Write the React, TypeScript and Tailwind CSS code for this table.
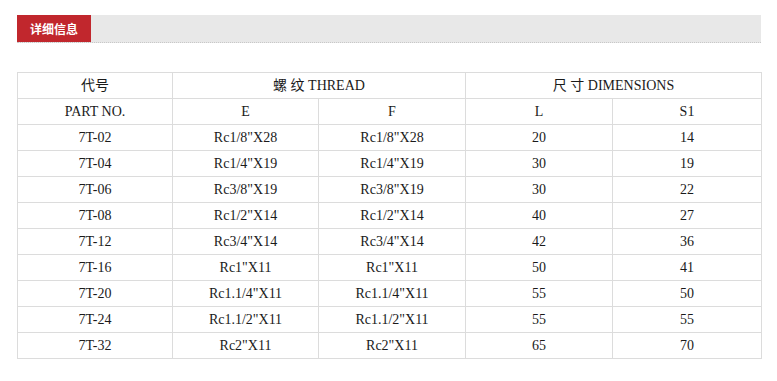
const rows = [
  ["7T-02", 'Rc1/8"X28', 'Rc1/8"X28', "20", "14"],
  ["7T-04", 'Rc1/4"X19', 'Rc1/4"X19', "30", "19"],
  ["7T-06", 'Rc3/8"X19', 'Rc3/8"X19', "30", "22"],
  ["7T-08", 'Rc1/2"X14', 'Rc1/2"X14', "40", "27"],
  ["7T-12", 'Rc3/4"X14', 'Rc3/4"X14', "42", "36"],
  ["7T-16", 'Rc1"X11', 'Rc1"X11', "50", "41"],
  ["7T-20", 'Rc1.1/4"X11', 'Rc1.1/4"X11', "55", "50"],
  ["7T-24", 'Rc1.1/2"X11', 'Rc1.1/2"X11', "55", "55"],
  ["7T-32", 'Rc2"X11', 'Rc2"X11', "65", "70"],
];

const cell =
  "border border-[#dcdcdc] h-[26px] p-0 text-center align-middle font-normal font-['Liberation_Serif','Noto_Sans_CJK_SC',serif] text-[14px] text-[#1a1a1a]";

const App = () => {
  return (
    <div className="w-[777px] h-[381px] bg-white pt-[15px] px-[17px] font-['Liberation_Serif','Noto_Sans_CJK_SC',serif] text-[14px] text-[#1a1a1a]">
      {/* tab header */}
      <div className="flex h-[28px] w-[744px] bg-[#e8e8e8] border-b border-dotted border-[#c8c8c8]">
        <div className="w-[74px] h-[27px] bg-[#c1272d] text-white font-bold text-[12px] font-['Noto_Sans_CJK_SC',sans-serif] flex items-center justify-center">
          详细信息
        </div>
      </div>

      <table className="mt-[29px] w-[744px] border-collapse table-fixed leading-none">
        <colgroup>
          <col className="w-[155px]" />
          <col className="w-[146px]" />
          <col className="w-[147px]" />
          <col className="w-[147px]" />
          <col className="w-[149px]" />
        </colgroup>
        <thead>
          <tr>
            <td className={cell}>代号</td>
            <td className={cell} colSpan={2}>螺 纹 THREAD</td>
            <td className={cell} colSpan={2}>尺 寸 DIMENSIONS</td>
          </tr>
          <tr>
            <td className={cell}>PART NO.</td>
            <td className={cell}>E</td>
            <td className={cell}>F</td>
            <td className={cell}>L</td>
            <td className={cell}>S1</td>
          </tr>
        </thead>
        <tbody>
          {rows.map((r) => (
            <tr key={r[0]}>
              {r.map((v, i) => (
                <td key={i} className={cell}>{v}</td>
              ))}
            </tr>
          ))}
        </tbody>
      </table>
    </div>
  );
};

export default App;
